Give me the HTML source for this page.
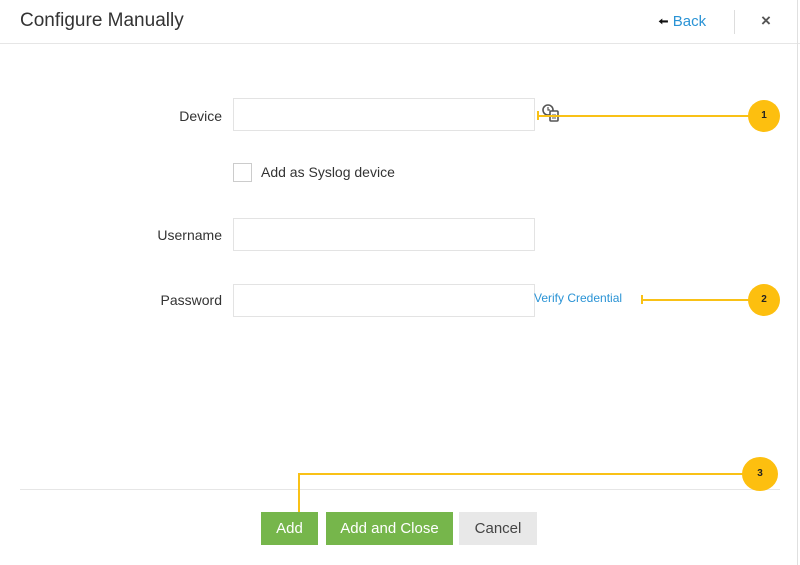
<!DOCTYPE html>
<html><head><style>
body{margin:0;width:800px;height:565px;background:#fff;font-family:"Liberation Sans",sans-serif;position:relative;overflow:hidden}
.a{position:absolute}
.lbl{font-size:14px;color:#333;text-align:right;width:120px;left:102px}
.in{border:1px solid #e3e3e3;background:#fff;height:31px;width:300px;left:233px}
.c{background:#fdbf0f;border-radius:50%;width:32px;height:32px;font-size:10px;font-weight:bold;text-align:center;line-height:32px;color:#222}
.ln{background:#f9c116}
.btn{height:33px;line-height:33px;text-align:center;font-size:15px;top:512px}
</style></head><body>
<div class="a" style="left:20px;top:10px;font-size:19px;color:#333">Configure Manually</div>
<div class="a" style="left:658px;top:13px;font-size:15px;color:#2a93d5"><span style="color:#111;font-size:13px">&#129064;</span> Back</div>
<div class="a" style="left:734px;top:10px;width:1px;height:24px;background:#ddd"></div>
<div class="a" style="left:761px;top:11px;font-size:17px;color:#555;font-weight:bold">×</div>
<div class="a" style="left:0;top:43px;width:800px;height:1px;background:#e6e6e6"></div>
<div class="a" style="left:797px;top:0;width:1px;height:565px;background:#e0e0e0"></div>

<div class="a lbl" style="top:108px">Device</div>
<div class="a in" style="top:98px"></div>
<svg class="a" style="left:542px;top:104px" width="18" height="18" viewBox="0 0 18 18"><circle cx="6" cy="6" r="5" fill="#fff" stroke="#555" stroke-width="1.6"/><path d="M6 3v3h2" stroke="#555" fill="none" stroke-width="1.2"/><rect x="8" y="7" width="8" height="10" rx="1" fill="#fff" stroke="#555" stroke-width="1.6"/><path d="M10 11h4M10 14h4" stroke="#555"/></svg>
<div class="a ln" style="left:537px;top:115px;width:212px;height:2px"></div>
<div class="a ln" style="left:537px;top:111px;width:2px;height:9px"></div>
<div class="a c" style="left:748px;top:100px">1</div>

<div class="a" style="left:233px;top:163px;width:17px;height:17px;border:1px solid #ccc"></div>
<div class="a" style="left:261px;top:164px;font-size:14px;color:#333">Add as Syslog device</div>

<div class="a lbl" style="top:227px">Username</div>
<div class="a in" style="top:218px"></div>
<div class="a lbl" style="top:292px">Password</div>
<div class="a in" style="top:284px"></div>
<div class="a" style="left:534px;top:291px;font-size:12px;color:#2a93d5">Verify Credential</div>
<div class="a ln" style="left:641px;top:299px;width:108px;height:2px"></div>
<div class="a ln" style="left:641px;top:295px;width:2px;height:9px"></div>
<div class="a c" style="left:748px;top:284px">2</div>

<div class="a" style="left:20px;top:489px;width:760px;height:1px;background:#e6e6e6"></div>
<div class="a ln" style="left:298px;top:473px;width:446px;height:2px"></div>
<div class="a ln" style="left:298px;top:473px;width:2px;height:40px"></div>
<div class="a c" style="left:742px;top:457px;width:36px;height:34px;line-height:34px">3</div>

<div class="a btn" style="left:261px;width:57px;background:#76b64b;color:#fff">Add</div>
<div class="a btn" style="left:326px;width:127px;background:#76b64b;color:#fff">Add and Close</div>
<div class="a btn" style="left:459px;width:78px;background:#e8e8e8;color:#444">Cancel</div>
</body></html>
